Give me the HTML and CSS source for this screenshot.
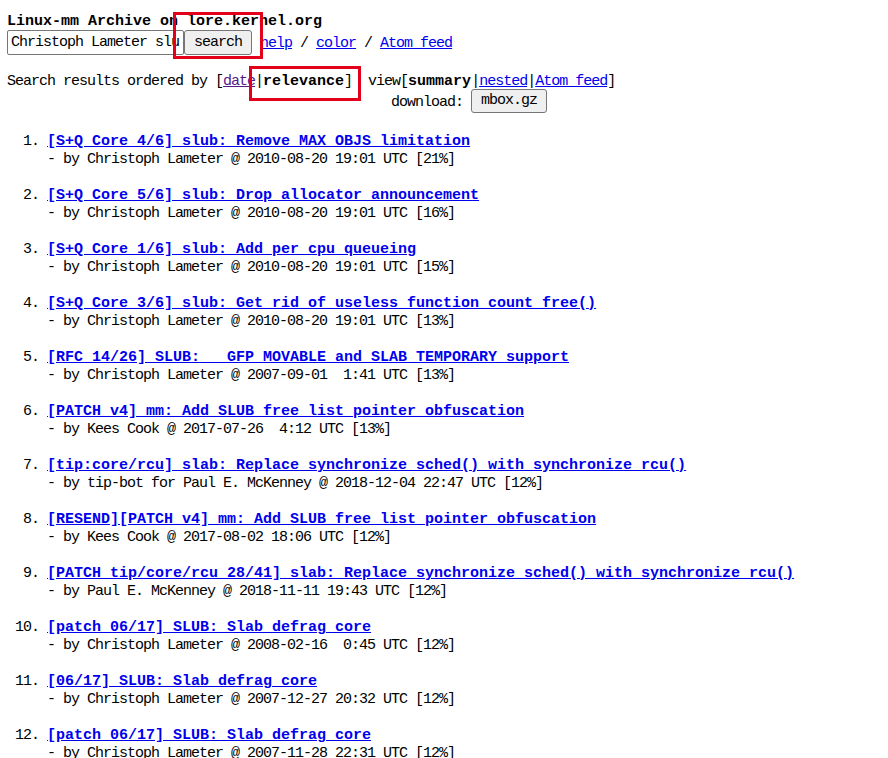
FILE: index.html
```html
<!DOCTYPE html>
<html>
<head>
<meta charset="utf-8">
<title>Linux-mm Archive search</title>
<link rel="stylesheet" href="styles.css">
</head>
<body>
<div class="title">Linux-mm Archive on lore.kernel.org</div>
<form class="searchbar">
<input class="q" type="text" name="q" value="Christoph Lameter slub"><button class="btn" type="button">search</button><span class="links"> <a href="#">help</a> / <a href="#">color</a> / <a href="#">Atom feed</a></span>
</form>
<div class="sortline">Search results ordered by [<a class="visited" href="#">date</a>|<b>relevance</b>]  view[<b>summary</b>|<a href="#">nested</a>|<a href="#">Atom feed</a>]</div>
<div class="download"><span class="dl-label">download: </span><button class="btn btn-mbox" type="button">mbox.gz</button></div>
<ol class="results">
<li><span class="num">1.</span><a class="subj" href="#">[S+Q Core 4/6] slub: Remove MAX_OBJS limitation</a><span class="by">- by Christoph Lameter @ 2010-08-20 19:01 UTC [21%]</span></li>
<li><span class="num">2.</span><a class="subj" href="#">[S+Q Core 5/6] slub: Drop allocator announcement</a><span class="by">- by Christoph Lameter @ 2010-08-20 19:01 UTC [16%]</span></li>
<li><span class="num">3.</span><a class="subj" href="#">[S+Q Core 1/6] slub: Add per cpu queueing</a><span class="by">- by Christoph Lameter @ 2010-08-20 19:01 UTC [15%]</span></li>
<li><span class="num">4.</span><a class="subj" href="#">[S+Q Core 3/6] slub: Get rid of useless function count_free()</a><span class="by">- by Christoph Lameter @ 2010-08-20 19:01 UTC [13%]</span></li>
<li><span class="num">5.</span><a class="subj" href="#">[RFC 14/26] SLUB: __GFP_MOVABLE and SLAB_TEMPORARY support</a><span class="by">- by Christoph Lameter @ 2007-09-01  1:41 UTC [13%]</span></li>
<li><span class="num">6.</span><a class="subj" href="#">[PATCH v4] mm: Add SLUB free list pointer obfuscation</a><span class="by">- by Kees Cook @ 2017-07-26  4:12 UTC [13%]</span></li>
<li><span class="num">7.</span><a class="subj" href="#">[tip:core/rcu] slab: Replace synchronize_sched() with synchronize_rcu()</a><span class="by">- by tip-bot for Paul E. McKenney @ 2018-12-04 22:47 UTC [12%]</span></li>
<li><span class="num">8.</span><a class="subj" href="#">[RESEND][PATCH v4] mm: Add SLUB free list pointer obfuscation</a><span class="by">- by Kees Cook @ 2017-08-02 18:06 UTC [12%]</span></li>
<li><span class="num">9.</span><a class="subj" href="#">[PATCH tip/core/rcu 28/41] slab: Replace synchronize_sched() with synchronize_rcu()</a><span class="by">- by Paul E. McKenney @ 2018-11-11 19:43 UTC [12%]</span></li>
<li><span class="num">10.</span><a class="subj" href="#">[patch 06/17] SLUB: Slab defrag core</a><span class="by">- by Christoph Lameter @ 2008-02-16  0:45 UTC [12%]</span></li>
<li><span class="num">11.</span><a class="subj" href="#">[06/17] SLUB: Slab defrag core</a><span class="by">- by Christoph Lameter @ 2007-12-27 20:32 UTC [12%]</span></li>
<li><span class="num">12.</span><a class="subj" href="#">[patch 06/17] SLUB: Slab defrag core</a><span class="by">- by Christoph Lameter @ 2007-11-28 22:31 UTC [12%]</span></li>
</ol>
<div class="mark mark-search"></div>
<div class="mark mark-relevance"></div>
</body>
</html>
```
FILE: styles.css
```css
html, body {
  background: #fff;
}
body {
  margin: 0;
  padding: 12px 7px 0;
  font-family: "Liberation Mono", "DejaVu Sans Mono", monospace;
  font-size: 15px;
  letter-spacing: -1px;
  line-height: 18px;
  color: #000;
  overflow: hidden;
}
a {
  color: #0000ee;
  text-decoration: underline;
}
a.visited {
  color: #551a8b;
}
b {
  font-weight: bold;
  letter-spacing: 0;
}
.title {
  font-weight: bold;
  letter-spacing: 0;
  height: 17px;
  padding-top: 1px;
  white-space: pre;
}
.searchbar {
  display: flex;
  align-items: center;
  height: 25px;
  margin: 0;
}
.q {
  box-sizing: border-box;
  width: 177px;
  height: 25px;
  margin: 0;
  padding: 0 3px;
  border: 1px solid #767676;
  border-radius: 2px;
  font: inherit;
  letter-spacing: inherit;
  color: #000;
  background: #fff;
}
.btn {
  box-sizing: border-box;
  height: 25px;
  margin: 0;
  padding: 0 9px;
  border: 1px solid #767676;
  border-radius: 3px;
  background: #efefef;
  font: inherit;
  letter-spacing: inherit;
  color: #000;
}
.links {
  white-space: pre;
  padding-top: 2px;
}
.sortline {
  margin-top: 17px;
  height: 17px;
  padding-top: 1px;
  white-space: pre;
}
.download {
  display: flex;
  align-items: center;
  height: 24px;
  margin-top: -1px;
  padding-left: 384px;
}
.dl-label {
  white-space: pre;
  padding-top: 4px;
}
.btn-mbox {
  height: 24px;
}
.results {
  list-style: none;
  margin: 20px 0 0;
  padding: 0;
}
.results li {
  display: grid;
  grid-template-columns: 40px auto;
  margin-bottom: 18px;
}
.num {
  grid-row: span 2;
  text-align: right;
  padding-right: 8px;
}
.subj {
  font-weight: bold;
  letter-spacing: 0;
  white-space: pre;
  justify-self: start;
}
.by {
  white-space: pre;
}
.mark {
  position: absolute;
  box-sizing: border-box;
  border: 3px solid #e3001b;
}
.mark-search {
  left: 173px;
  top: 12px;
  width: 90px;
  height: 47px;
}
.mark-relevance {
  left: 249px;
  top: 66px;
  width: 112px;
  height: 35px;
}
```
